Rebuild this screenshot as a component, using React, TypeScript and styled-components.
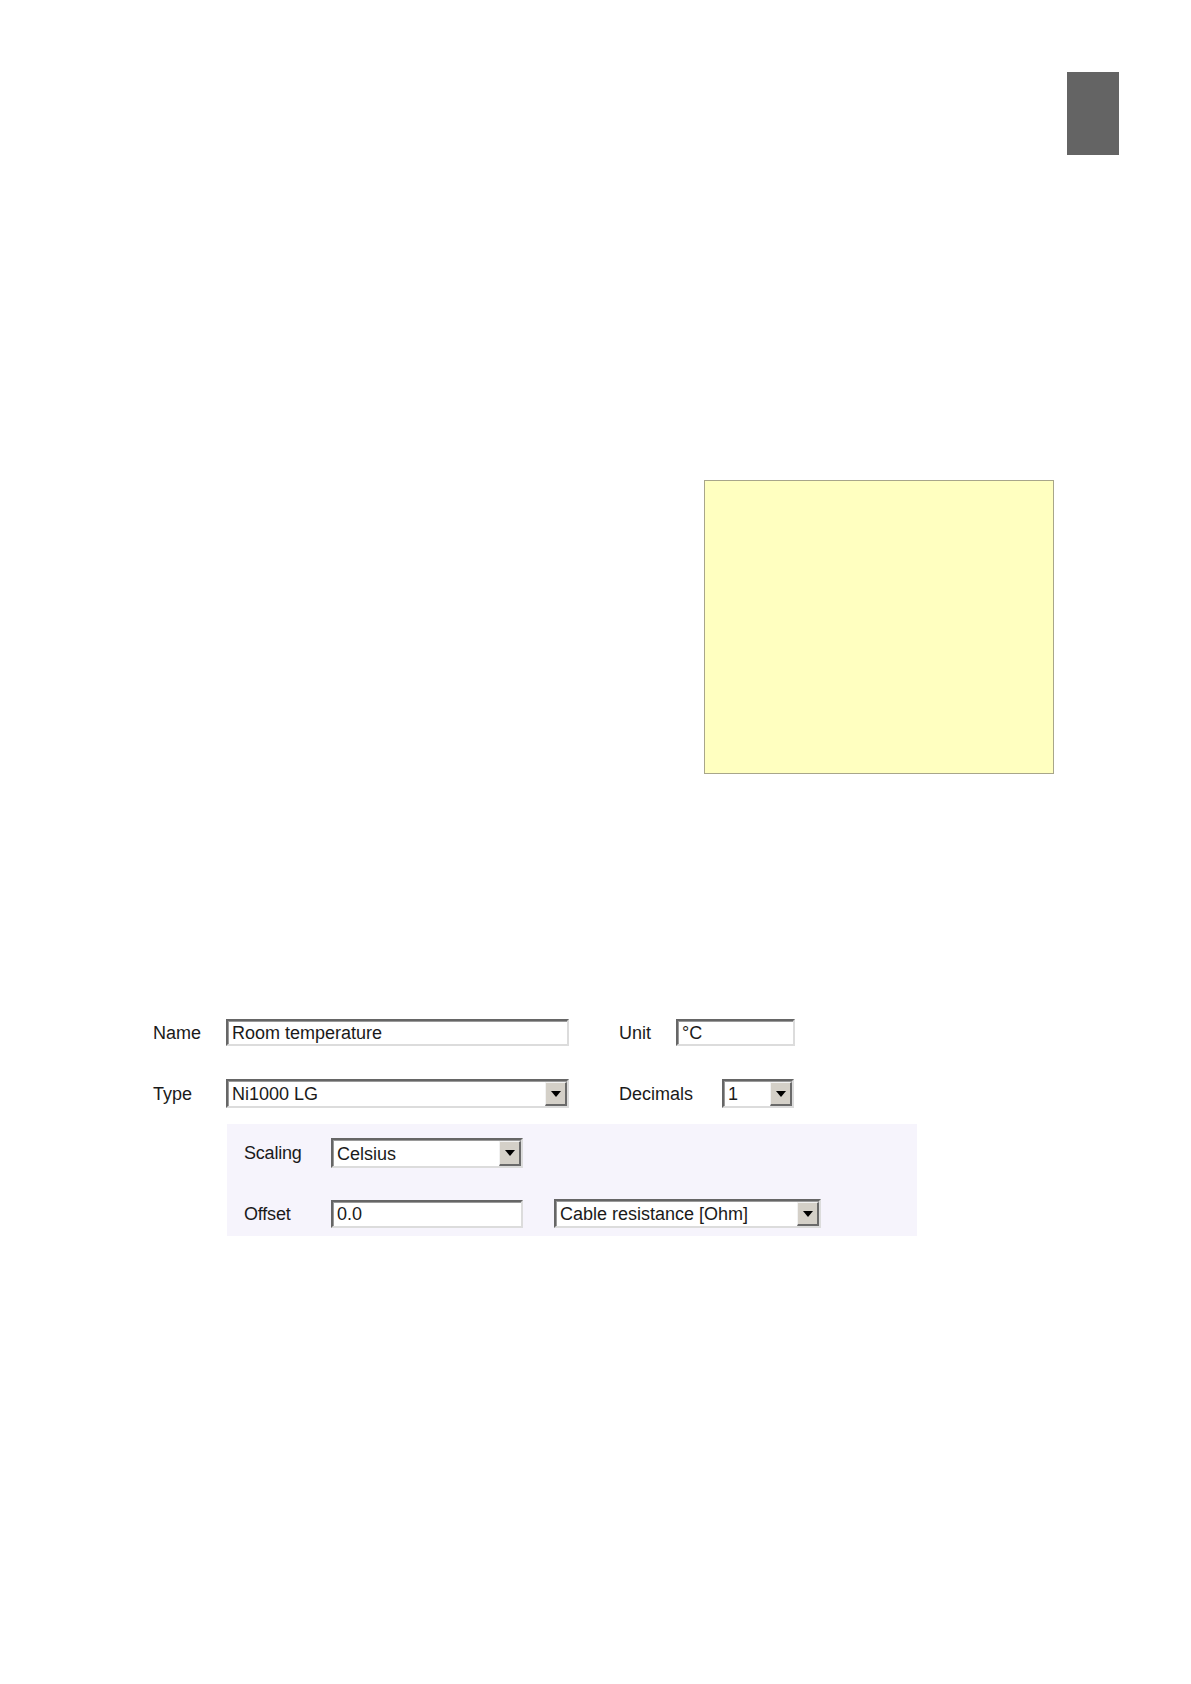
import * as React from 'react';
import styled, { createGlobalStyle } from 'styled-components';

/*!
 * Styles
 */

const GlobalStyle = createGlobalStyle`
  html, body {
    margin: 0;
    padding: 0;
    background: #ffffff;
  }

  body {
    font-family: "Liberation Sans", Arial, sans-serif;
    color: #1a1a1a;
  }
`;

const Page = styled.div`
  width: 1191px;
  min-height: 1684px;
  display: flex;
  flex-direction: column;
`;

const Header = styled.div`
  display: flex;
  justify-content: flex-end;
  padding: 72px 72px 0 0;
`;

const Tab = styled.div`
  width: 52px;
  height: 83px;
  background: #646464;
`;

const Note = styled.div`
  margin: 325px 0 0 704px;
  width: 348px;
  height: 292px;
  border: 1px solid #a8a68a;
  background: #ffffc0;
`;

const Form = styled.div`
  margin: 245px 0 0 153px;
  display: flex;
  flex-direction: column;
`;

const Row = styled.div<{ $gap?: number }>`
  display: flex;
  align-items: center;
  margin-top: ${(p) => p.$gap || 0}px;
`;

const Label = styled.div<{ $width: number; $shift?: number; $narrow?: boolean }>`
  width: ${(p) => p.$width}px;
  margin-left: ${(p) => p.$shift || 0}px;
  font-size: 18px;
  line-height: 20px;
  letter-spacing: ${(p) => (p.$narrow ? '-0.2px' : '0')};
  flex-shrink: 0;
`;

const Field = styled.div<{ $width: number; $height: number }>`
  box-sizing: border-box;
  width: ${(p) => p.$width}px;
  height: ${(p) => p.$height}px;
  display: flex;
  align-items: center;
  background: #ffffff;
  border-top: 2px solid #666666;
  border-left: 2px solid #666666;
  border-right: 2px solid #dcdcdc;
  border-bottom: 2px solid #dcdcdc;
  box-shadow: inset 1px 1px 0 #9a9a9a;
  font-size: 18px;
  flex-shrink: 0;
`;

const Value = styled.span`
  flex: 1;
  padding: 2px 0 0 4px;
  white-space: nowrap;
  overflow: hidden;
`;

const DropButton = styled.div`
  box-sizing: border-box;
  width: 22px;
  align-self: stretch;
  margin: 1px 0 0 0;
  display: flex;
  align-items: center;
  justify-content: center;
  background: #d4d0c8;
  border-top: 1px solid #f2f2f2;
  border-left: 1px solid #f2f2f2;
  border-right: 2px solid #6a6a6a;
  border-bottom: 2px solid #6a6a6a;
`;

const Panel = styled.div`
  margin: 16px 0 0 74px;
  width: 690px;
  box-sizing: border-box;
  padding: 14px 0 8px 17px;
  background: #f6f4fc;
  display: flex;
  flex-direction: column;
`;

/*!
 * Parts
 */

const Arrow = () => (
  <svg width="10" height="6" viewBox="0 0 10 6">
    <polygon points="0,0 10,0 5,6" fill="#000" />
  </svg>
);

const TextField = ({ value, width, height = 27 }: any) => (
  <Field $width={width} $height={height}>
    <Value>{value}</Value>
  </Field>
);

const SelectField = ({ value, width, height = 29 }: any) => (
  <Field $width={width} $height={height}>
    <Value>{value}</Value>
    <DropButton>
      <Arrow />
    </DropButton>
  </Field>
);

export default function App() {
  return (
    <Page>
      <GlobalStyle />
      <Header>
        <Tab />
      </Header>
      <Note />
      <Form>
        <Row>
          <Label $width={73}>Name</Label>
          <TextField value="Room temperature" width={343} />
          <Label $width={57} $shift={50}>Unit</Label>
          <TextField value="°C" width={119} />
        </Row>
        <Row $gap={33}>
          <Label $width={73}>Type</Label>
          <SelectField value="Ni1000 LG" width={343} />
          <Label $width={103} $shift={50}>Decimals</Label>
          <SelectField value="1" width={72} />
        </Row>
        <Panel>
          <Row>
            <Label $width={87} $narrow>Scaling</Label>
            <SelectField value="Celsius" width={192} height={30} />
          </Row>
          <Row $gap={31}>
            <Label $width={87} $narrow>Offset</Label>
            <TextField value="0.0" width={192} height={28} />
            <Label $width={0} $shift={31} />
            <SelectField value="Cable resistance [Ohm]" width={267} />
          </Row>
        </Panel>
      </Form>
    </Page>
  );
}
